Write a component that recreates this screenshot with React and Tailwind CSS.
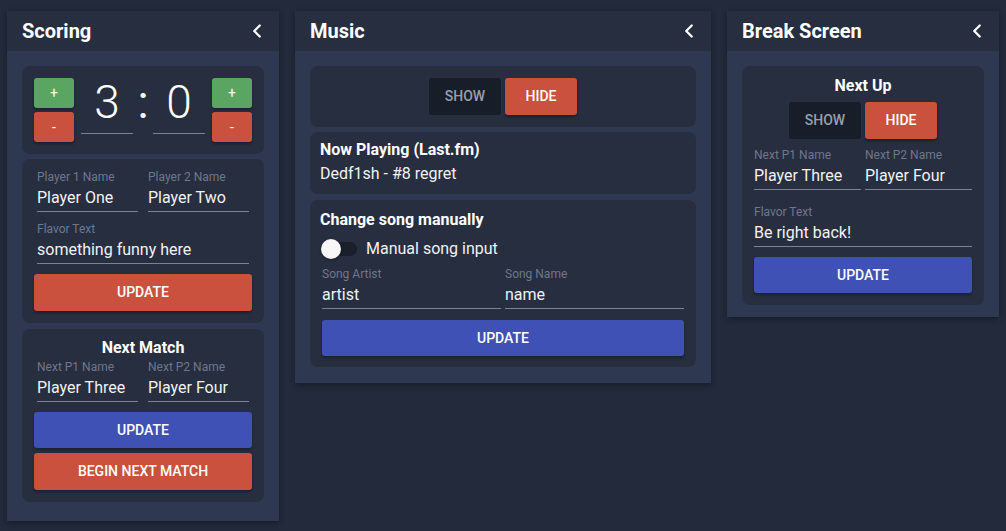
import React from 'react';
import { ChevronLeft } from 'lucide-react';

const Panel = ({ title, width, bodyClass, children }) => (
    <div className={`${width} bg-[#2e3850] shadow-[0_2px_6px_rgba(0,0,0,0.35)]`}>
        <div className="h-10 pl-[15px] pr-[11px] flex items-center justify-between bg-[#262e40]">
            <h2 className="text-[20px] leading-7 font-bold text-white">{title}</h2>
            <ChevronLeft size={22} strokeWidth={2.5} className="text-white" />
        </div>
        <div className={`px-[15px] pt-[15px] flex flex-col gap-[5px] ${bodyClass}`}>{children}</div>
    </div>
);

const Card = ({ className = '', children }) => (
    <div className={`bg-[#262e40] rounded-lg ${className}`}>{children}</div>
);

const Field = ({ label, value }) => (
    <div className="flex flex-col min-w-0">
        <label className="text-[12px] leading-[14px] text-[#70778a]">{label}</label>
        <input
            defaultValue={value}
            className="mt-[2px] h-6 pb-px box-content leading-6 text-[16px] text-[#f2f2f2] bg-transparent outline-none border-b border-[#7d8290] w-full"
        />
    </div>
);

const Btn = ({ color, className = '', children }) => {
    const colors = {
        red: 'bg-[#c9513e] text-white',
        blue: 'bg-[#3f51b5] text-white',
        dark: 'bg-[#181d2a] text-[#9aa0aa] shadow-none',
    };
    return (
        <button
            className={`rounded-[3px] text-[14px] font-medium uppercase shadow-[0_2px_3px_rgba(0,0,0,0.3)] ${colors[color]} ${className}`}
        >
            {children}
        </button>
    );
};

const ScoreButtons = () => (
    <div className="flex flex-col gap-1 w-10">
        <button className="h-[30px] rounded-[3px] bg-[#5ba563] text-white text-[14px] shadow-[0_2px_3px_rgba(0,0,0,0.3)]">+</button>
        <button className="h-[30px] rounded-[3px] bg-[#c9513e] text-white text-[14px] shadow-[0_2px_3px_rgba(0,0,0,0.3)]">-</button>
    </div>
);

const ShowHide = () => (
    <div className="flex justify-center gap-1">
        <Btn color="dark" className="w-[72px] h-[37px]">Show</Btn>
        <Btn color="red" className="w-[72px] h-[37px]">Hide</Btn>
    </div>
);

export default function App() {
    return (
        <div className="min-h-screen bg-[#222a3b] pl-[7px] pt-[11px] flex items-start gap-4 font-['Roboto',sans-serif]">
            {/* Scoring */}
            <Panel title="Scoring" width="w-[272px]" bodyClass="pb-[19px]">
                <Card className="p-3">
                    <div className="flex items-start">
                        <ScoreButtons />
                        <div className="ml-[7px] w-[52px] h-[56px] pt-px border-b border-[#7d8290] text-center text-[46px] leading-[46px] font-light text-white">3</div>
                        <div className="w-5 text-center text-[46px] leading-[46px] pt-px text-white">:</div>
                        <div className="w-[52px] h-[56px] pt-px border-b border-[#7d8290] text-center text-[46px] leading-[46px] font-light text-white">0</div>
                        <div className="ml-[7px]"><ScoreButtons /></div>
                    </div>
                </Card>
                <Card className="px-3 pt-[11px] pb-3">
                    <div className="px-[3px] grid grid-cols-2 gap-x-[10px] gap-y-[10px]">
                        <Field label="Player 1 Name" value="Player One" />
                        <Field label="Player 2 Name" value="Player Two" />
                        <div className="col-span-2">
                            <Field label="Flavor Text" value="something funny here" />
                        </div>
                    </div>
                    <Btn color="red" className="mt-[10px] w-full h-[37px]">Update</Btn>
                </Card>
                <Card className="px-3 pt-[7px] pb-3 mt-px">
                    <h3 className="text-center text-[16px] leading-6 font-bold text-white">Next Match</h3>
                    <div className="px-[3px] grid grid-cols-2 gap-x-[10px]">
                        <Field label="Next P1 Name" value="Player Three" />
                        <Field label="Next P2 Name" value="Player Four" />
                    </div>
                    <Btn color="blue" className="mt-[10px] w-full h-9 block">Update</Btn>
                    <Btn color="red" className="mt-[5px] w-full h-[37px] block">Begin Next Match</Btn>
                </Card>
            </Panel>

            {/* Music */}
            <Panel title="Music" width="w-[416px]" bodyClass="pb-4">
                <Card className="py-3">
                    <ShowHide />
                </Card>
                <Card className="px-[10px] pt-[6px] pb-2">
                    <h3 className="text-[16px] leading-6 font-bold text-white">Now Playing (Last.fm)</h3>
                    <p className="text-[16px] leading-6 text-[#f2f2f2]">Dedf1sh - #8 regret</p>
                </Card>
                <Card className="pl-[10px] pr-3 pt-2 pb-[11px] mt-px">
                    <h3 className="text-[16px] leading-6 font-bold text-white">Change song manually</h3>
                    <div className="mt-[5px] pl-px flex items-center h-6">
                        <div className="relative w-9 h-[14px] rounded-full bg-[#1a1f2c]">
                            <span className="absolute left-0 top-[-3px] w-5 h-5 rounded-full bg-[#f7f7f7] shadow-[0_1px_3px_rgba(0,0,0,0.4)]" />
                        </div>
                        <span className="ml-[9px] text-[16px] leading-6 text-[#f2f2f2]">Manual song input</span>
                    </div>
                    <div className="mt-[6px] pl-[2px] grid grid-cols-2 gap-x-1">
                        <Field label="Song Artist" value="artist" />
                        <Field label="Song Name" value="name" />
                    </div>
                    <Btn color="blue" className="ml-[2px] mt-[11px] w-[362px] h-9 block">Update</Btn>
                </Card>
            </Panel>

            {/* Break Screen */}
            <Panel title="Break Screen" width="w-[272px]" bodyClass="pb-3">
                <Card className="px-3 pt-2 pb-3">
                    <h3 className="text-center text-[16px] leading-6 font-bold text-white">Next Up</h3>
                    <div className="mt-1">
                        <ShowHide />
                    </div>
                    <div className="mt-[9px] grid grid-cols-2 gap-x-1">
                        <Field label="Next P1 Name" value="Player Three" />
                        <Field label="Next P2 Name" value="Player Four" />
                    </div>
                    <div className="mt-[15px]">
                        <Field label="Flavor Text" value="Be right back!" />
                    </div>
                    <Btn color="blue" className="mt-[10px] w-full h-9 block">Update</Btn>
                </Card>
            </Panel>
        </div>
    );
}
